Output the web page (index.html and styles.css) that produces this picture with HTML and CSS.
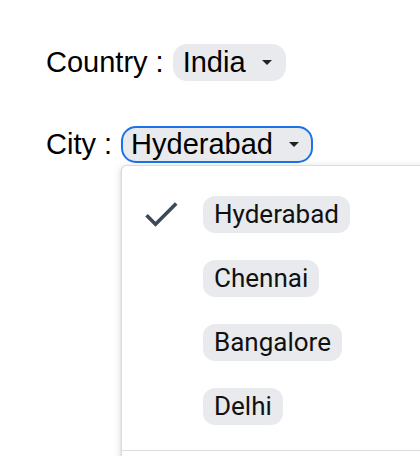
FILE: index.html
```html
<!DOCTYPE html>
<html lang="en">
<head>
<meta charset="utf-8">
<title>Country / City</title>
<link rel="stylesheet" href="styles.css">
</head>
<body>
<div class="form">
  <div class="row row-country">
    <span class="label">Country :</span>
    <span class="chip">India<span class="caret"></span></span>
  </div>
  <div class="row row-city">
    <span class="label">City :</span>
    <span class="chip chip-active">Hyderabad<span class="caret"></span></span>
  </div>
</div>
<div class="menu">
  <ul class="options">
    <li class="option">
      <svg class="check" viewBox="0 0 24 24" width="44" height="44" aria-hidden="true"><path d="M9 16.17L4.83 12l-1.42 1.41L9 19 21 7l-1.41-1.41z"/></svg>
      <span class="opt-chip">Hyderabad</span>
    </li>
    <li class="option"><span class="check-space"></span><span class="opt-chip">Chennai</span></li>
    <li class="option"><span class="check-space"></span><span class="opt-chip">Bangalore</span></li>
    <li class="option"><span class="check-space"></span><span class="opt-chip">Delhi</span></li>
  </ul>
  <div class="divider"></div>
  <div class="menu-footer"></div>
</div>
</body>
</html>
```
FILE: styles.css
```css
html, body {
  margin: 0;
  padding: 0;
  overflow: hidden;
  background: #ffffff;
}
body {
  font-family: "Liberation Sans", Arial, sans-serif;
  color: #000;
  width: 420px;
  height: 456px;
  position: relative;
}
.form {
  padding: 44px 0 0 46px;
  display: flex;
  flex-direction: column;
  gap: 45px;
}
.row {
  display: flex;
  align-items: center;
  height: 37px;
}
.label {
  font-size: 29px;
  margin-right: 9px;
  white-space: pre;
}
.chip {
  display: inline-flex;
  align-items: center;
  box-sizing: border-box;
  height: 37px;
  padding: 0 12px 0 8px;
  border: 2px solid transparent;
  border-radius: 14px;
  background: #e8eaed;
  font-size: 29px;
  line-height: 1;
}
.chip-active {
  border-color: #1a73e8;
  border-radius: 15px;
}
.caret {
  width: 0;
  height: 0;
  margin-left: 16px;
  border-left: 5px solid transparent;
  border-right: 5px solid transparent;
  border-top: 5px solid #222;
}
.menu {
  position: absolute;
  left: 121px;
  top: 165px;
  width: 330px;
  background: #fff;
  border: 1px solid #dadce0;
  border-radius: 6px;
  box-shadow: 0 2px 6px 2px rgba(60, 64, 67, 0.12), 0 1px 2px rgba(60, 64, 67, 0.2);
  padding-top: 16px;
}
.options {
  list-style: none;
  margin: 0;
  padding: 0;
}
.option {
  display: flex;
  align-items: center;
  height: 64px;
  padding-left: 17px;
}
.check {
  fill: #3d4a55;
  width: 44px;
  height: 44px;
  flex: none;
  margin-right: 20px;
}
.check-space {
  width: 44px;
  flex: none;
  margin-right: 20px;
}
.opt-chip {
  display: inline-flex;
  align-items: center;
  height: 37px;
  padding: 0 11px;
  border-radius: 12px;
  background: #e8eaed;
  font-family: Roboto, "Noto Sans", sans-serif;
  font-size: 26px;
  color: #111;
}
.divider {
  margin-top: 12px;
  height: 1px;
  background: #dadce0;
}
.menu-footer {
  height: 40px;
}
```
